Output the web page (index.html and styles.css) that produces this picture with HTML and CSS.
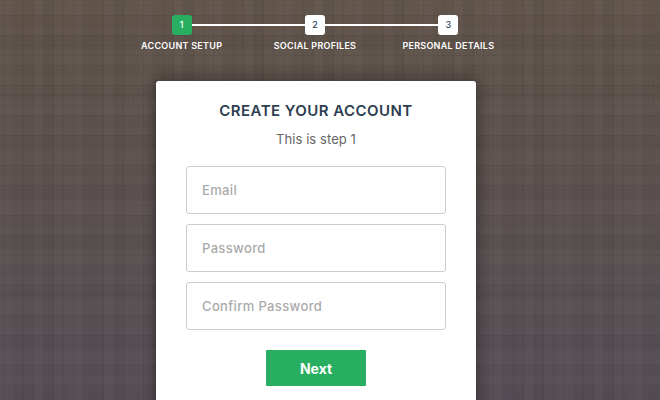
FILE: index.html
```html
<!DOCTYPE html>
<html lang="en">
<head>
<meta charset="utf-8">
<title>Create your account</title>
<link rel="stylesheet" href="styles.css">
</head>
<body>
<main class="page">
  <ol class="steps">
    <li class="step active"><span class="num">1</span><span class="label">ACCOUNT SETUP</span></li>
    <li class="step"><span class="num">2</span><span class="label">SOCIAL PROFILES</span></li>
    <li class="step"><span class="num">3</span><span class="label">PERSONAL DETAILS</span></li>
  </ol>
  <form class="card">
    <h1 class="title">CREATE YOUR ACCOUNT</h1>
    <p class="sub">This is step 1</p>
    <input class="field" type="text" placeholder="Email">
    <input class="field" type="text" placeholder="Password">
    <input class="field" type="text" placeholder="Confirm Password">
    <button class="next" type="button">Next</button>
  </form>
</main>
</body>
</html>
```
FILE: styles.css
```css
* { box-sizing: border-box; }
html, body { margin: 0; height: 100%; overflow: hidden; }
body {
  font-family: "Inter", "Open Sans", sans-serif;
  background-color: #574c4b;
  background-image:
    repeating-linear-gradient(90deg, transparent 0 3px, rgba(0,0,0,.05) 3px 4px, transparent 4px 10px),
    repeating-linear-gradient(0deg, transparent 0 4px, rgba(0,0,0,.05) 4px 5px, transparent 5px 10px),
    linear-gradient(90deg,
      rgba(255,255,255,.018) 0 14px, transparent 0 34px, rgba(255,255,255,.018) 0 44px,
      rgba(0,0,0,.015) 0 54px, rgba(255,255,255,.01) 0 70px),
    linear-gradient(0deg,
      rgba(0,0,0,.015) 0 15px, rgba(255,255,255,.012) 0 25px, transparent 0 35px,
      rgba(255,255,255,.015) 0 50px),
    linear-gradient(180deg, #5e5248 0%, #554d55 100%);
  background-size: auto, auto, 70px 100%, 100% 50px, auto;
}
.page { display: flex; flex-direction: column; width: 632px; height: 400px; padding-top: 15px; align-items: center; }
.steps {
  list-style: none; margin: 0 0 0 -2px; padding: 0; width: 400px;
  display: flex; position: relative;
}
.step { flex: 1; display: flex; flex-direction: column; align-items: center; position: relative; }
.step + .step::before {
  content: ""; position: absolute; top: 9px; left: -50%; width: 100%; height: 2px; background: #fff;
}
.num {
  position: relative; z-index: 1; width: 20px; height: 20px; border-radius: 3px;
  background: #fff; color: #2c3e50; font-size: 9px; line-height: 20px; text-align: center; font-weight: 500;
}
.active .num { background: #27ae60; color: #fff; }
.label {
  margin-top: 5px; color: #fff; font-size: 9px; line-height: 12px; font-weight: 600; white-space: nowrap; letter-spacing: .26px;
}
.card {
  margin-top: 29px; width: 320px; height: 340px; flex: none;
  background: #fff; border-radius: 3px; padding: 20px 30px 0;
  box-shadow: 0 0 15px 1px rgba(0,0,0,.4);
  display: flex; flex-direction: column; align-items: center;
}
.title { margin: 0; font-size: 15px; line-height: 20px; font-weight: 600; color: #2c3e50; letter-spacing: .45px; white-space: nowrap; }
.sub { margin: 9px 0 0; font-size: 13px; line-height: 18px; color: #666; letter-spacing: .08px; }
.field {
  width: 260px; height: 48px; flex: none; margin-bottom: 10px; padding: 0 15px;
  border: 1px solid #ccc; border-radius: 3px; background: #fff;
  font: 500 13px "Inter", sans-serif; letter-spacing: .35px; color: #2c3e50;
}
.sub + .field { margin-top: 18px; }
.field::placeholder { color: #aaa; opacity: 1; }
.next {
  margin-top: 10px; width: 100px; height: 36px; border: 0; border-radius: 1px;
  background: #27ae60; color: #fff; font: 700 14px "Inter", sans-serif;
}
```
